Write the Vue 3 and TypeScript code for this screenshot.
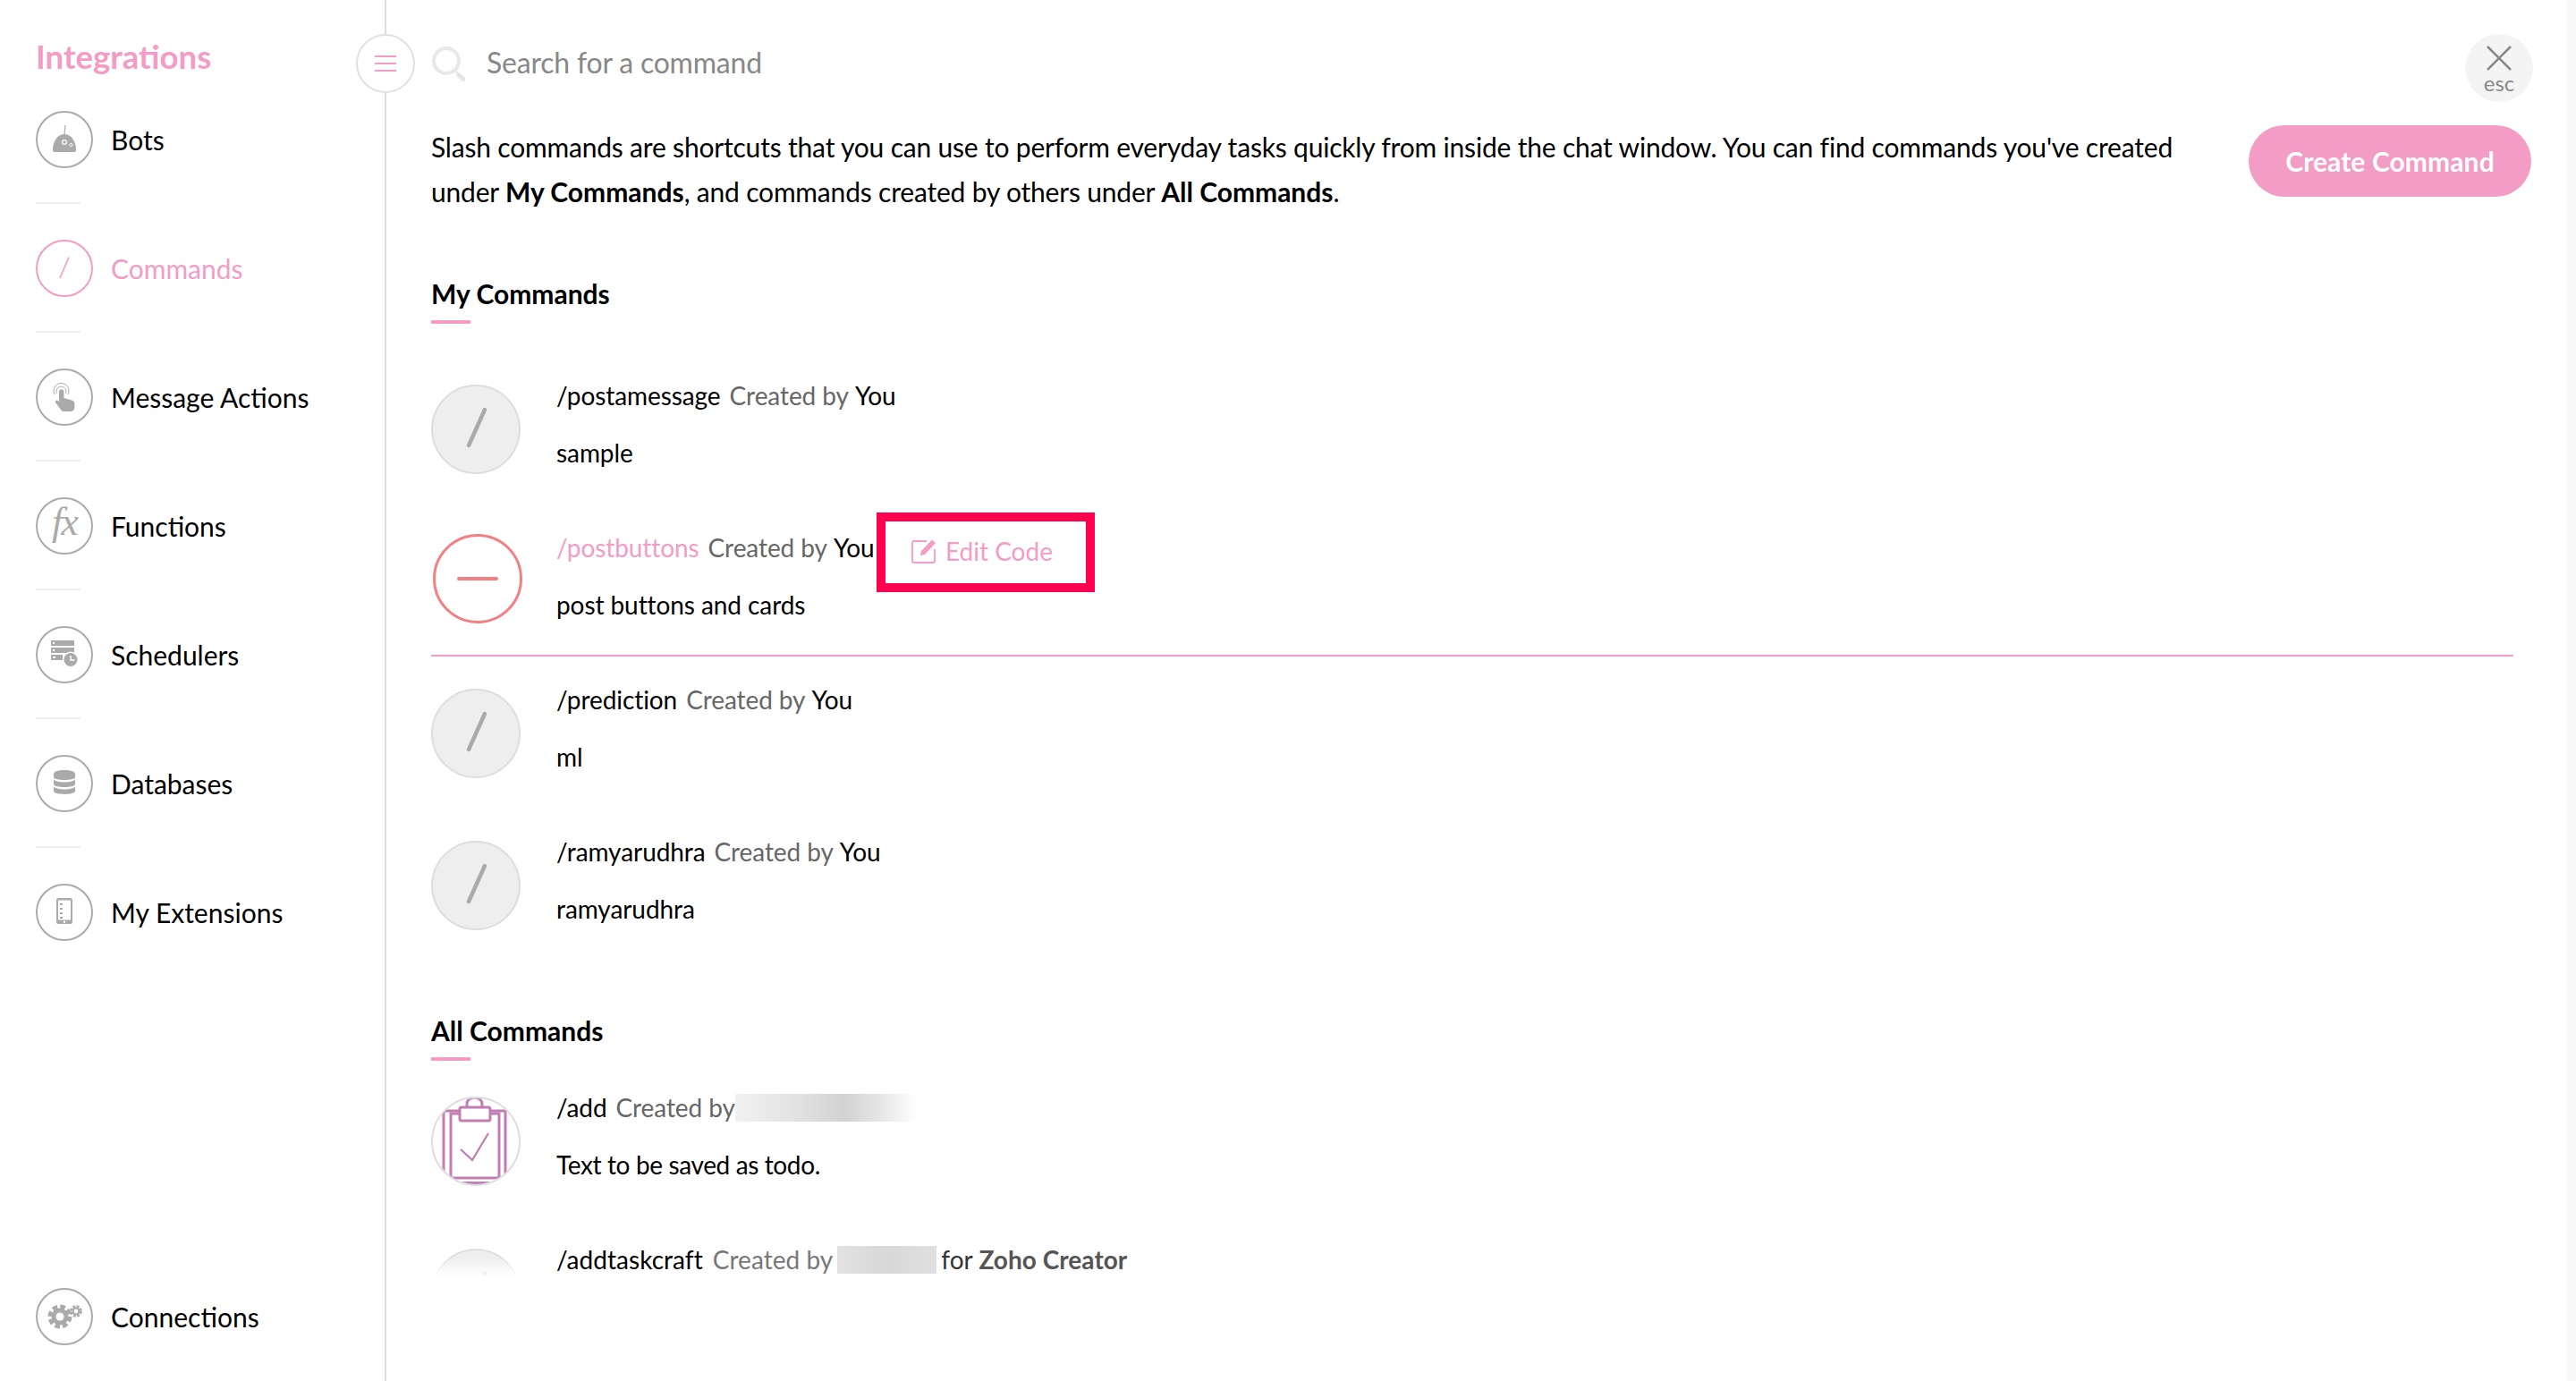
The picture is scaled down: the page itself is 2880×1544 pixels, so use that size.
<script setup lang="ts">
interface NavItem { label: string; icon: string; active?: boolean }
const navItems: NavItem[] = [
  { label: 'Bots', icon: 'bot' },
  { label: 'Commands', icon: 'slash', active: true },
  { label: 'Message Actions', icon: 'hand' },
  { label: 'Functions', icon: 'fx' },
  { label: 'Schedulers', icon: 'sched' },
  { label: 'Databases', icon: 'db' },
  { label: 'My Extensions', icon: 'phone' },
]
const myCommands = [
  { name: '/postamessage', desc: 'sample' },
  { name: '/postbuttons', desc: 'post buttons and cards', hover: true },
  { name: '/prediction', desc: 'ml' },
  { name: '/ramyarudhra', desc: 'ramyarudhra' },
]
</script>

<template>
  <div class="page">
    <aside class="sidebar">
      <div>
        <h1 class="brand">Integrations</h1>
        <nav class="nav">
          <div v-for="item in navItems" :key="item.label" class="nav-block">
            <div class="nav-item" :class="{ active: item.active }">
              <span class="nav-icon">
                <svg v-if="item.icon === 'bot'" viewBox="0 0 64 64" class="ico">
                  <path d="M32 27 L33 16" stroke="#aaa" stroke-width="1.2" fill="none" />
                  <path d="M19 44 C19 33 25 26 32 26 C39 26 45 33 45 44 Q45 46 42 46 H22 Q19 46 19 44 Z" fill="#aaa" />
                  <circle cx="32" cy="35" r="2.4" fill="none" stroke="#fff" stroke-width="1.2" />
                  <circle cx="39.5" cy="38" r="1.6" fill="none" stroke="#fff" stroke-width="1" />
                </svg>
                <svg v-else-if="item.icon === 'slash'" viewBox="0 0 64 64" class="ico">
                  <path d="M37 19.5 L27 43" stroke="#f29cc6" stroke-width="1.6" fill="none" />
                </svg>
                <svg v-else-if="item.icon === 'hand'" viewBox="0 0 64 64" class="ico">
                  <path d="M23.5 28 a5.500 5.500 0 1 1 10 0" stroke="#aaa" stroke-width="1" fill="none" />
                  <path d="M21 29 a8.500 8.500 0 1 1 15 0" stroke="#aaa" stroke-width="1" fill="none" />
                  <path d="M26 26 a2.700 2.700 0 0 1 5.400 0 V33 l9 2.500 q3 1 3 4 V43 q0 5 -5 5 H31 q-2 0 -3 -2 L22 38 q-1 -2.500 2 -2.500 l2 1.500 Z" fill="#aaa" />
                </svg>
                <span v-else-if="item.icon === 'fx'" class="fx">fx</span>
                <svg v-else-if="item.icon === 'sched'" viewBox="0 0 64 64" class="ico">
                  <rect x="17" y="16" width="26" height="6" fill="#aaa" />
                  <rect x="17" y="24" width="26" height="6" fill="#aaa" />
                  <rect x="17" y="32" width="13" height="6" fill="#aaa" />
                  <rect x="19" y="18" width="2" height="2" fill="#fff" />
                  <rect x="19" y="26" width="2" height="2" fill="#fff" />
                  <rect x="19" y="34" width="3" height="2" fill="#fff" />
                  <circle cx="39" cy="37.500" r="9" fill="#fff" />
                  <circle cx="39" cy="37.500" r="7.500" fill="#aaa" />
                  <path d="M39 33 V38 H43.500" stroke="#fff" stroke-width="1.5" fill="none" />
                </svg>
                <svg v-else-if="item.icon === 'db'" viewBox="0 0 64 64" class="ico">
                  <path d="M20 21 C20 15.500 44 15.500 44 21 V25 C44 29 20 29 20 25 Z" fill="#aaa" />
                  <path d="M20 27.500 C23 31.500 41 31.500 44 27.500 V33 C44 37 20 37 20 33 Z" fill="#aaa" />
                  <path d="M20 35.500 C23 39.500 41 39.500 44 35.500 V40.500 C44 45 20 45 20 40.500 Z" fill="#aaa" />
                </svg>
                <svg v-else-if="item.icon === 'phone'" viewBox="0 0 64 64" class="ico">
                  <rect x="23" y="16" width="18" height="29" rx="2.500" fill="#aaa" />
                  <rect x="25" y="18.500" width="14" height="22" fill="#fff" />
                  <path d="M27 23 H30 M27 28 H30 M27 33 H30 M27 38 H30" stroke="#aaa" stroke-width="1.800" />
                  <circle cx="32" cy="42.800" r="1.200" fill="#fff" />
                </svg>
              </span>
              <span class="nav-label">{{ item.label }}</span>
            </div>
            <div class="nav-divider"></div>
          </div>
        </nav>
      </div>
      <div class="nav-item connections">
        <span class="nav-icon">
          <svg viewBox="0 0 64 64" class="ico">
            <circle cx="27" cy="32" r="11" fill="none" stroke="#aaa" stroke-width="5" stroke-dasharray="5.500 3.140" />
            <circle cx="27" cy="32" r="9.500" fill="#aaa" />
            <circle cx="27" cy="32" r="4.500" fill="#fff" />
            <circle cx="45" cy="26" r="5.500" fill="none" stroke="#aaa" stroke-width="2.600" stroke-dasharray="2.900 1.420" />
            <circle cx="45" cy="26" r="4.500" fill="#aaa" />
            <circle cx="45" cy="26" r="2.400" fill="#fff" />
          </svg>
        </span>
        <span class="nav-label">Connections</span>
      </div>
      <button class="menu-toggle" aria-label="Menu">
        <span></span><span></span><span></span>
      </button>
    </aside>

    <main class="main">
      <header class="topbar">
        <div class="search">
          <svg viewBox="0 0 40 40" class="search-icon">
            <circle cx="17" cy="16" r="14" fill="none" stroke="#e8e8e8" stroke-width="4" />
            <path d="M27 27 L30 30" stroke="#e8e8e8" stroke-width="2" />
            <path d="M31 32 L36 36.500" stroke="#e4e4e4" stroke-width="5" stroke-linecap="round" />
          </svg>
          <span class="search-text">Search for a command</span>
        </div>
        <div class="close">
          <svg viewBox="0 0 28 28" class="close-x">
            <path d="M1 1 L27 27 M27 1 L1 27" stroke="#888" stroke-width="2.600" fill="none" />
          </svg>
          <span class="esc">esc</span>
        </div>
      </header>

      <section class="intro">
        <div class="intro-text">
          <p class="intro-line">Slash commands are shortcuts that you can use to perform everyday tasks quickly from inside the chat window. You can find commands you've created</p>
          <p class="intro-line">under <b>My Commands</b>, and commands created by others under <b>All Commands</b>.</p>
        </div>
        <button class="create">Create Command</button>
      </section>

      <div class="lists">
        <h2 class="heading">My Commands</h2>
        <div class="heading-bar first-bar"></div>

        <div v-for="c in myCommands" :key="c.name" class="row" :class="{ hovered: c.hover }">
          <span v-if="c.hover" class="cmd-icon minus"><i></i></span>
          <span v-else class="cmd-icon">
            <svg viewBox="0 0 100 100" class="full"><path d="M60 28 L42 68" stroke="#aaa" stroke-width="4.500" stroke-linecap="round" /></svg>
          </span>
          <div class="cmd-text">
            <div class="cmd-title">
              <span class="cmd-name">{{ c.name }}</span>
              <span class="cmd-by">Created by</span>
              <span class="cmd-you">You</span>
            </div>
            <div class="cmd-desc">{{ c.desc }}</div>
          </div>
          <div v-if="c.hover" class="edit-box">
            <svg viewBox="0 0 28 28" class="edit-icon">
              <path d="M17 3 H3 Q1 3 1 5 V25 Q1 27 3 27 H24 Q26 27 26 25 V12" fill="none" stroke="#f29cc6" stroke-width="1.800" />
              <path d="M10 19 L11 14 L23 1.500 L27 5 L15 18 Z" fill="#f29cc6" />
            </svg>
            <span class="edit-label">Edit Code</span>
          </div>
        </div>

        <h2 class="heading all-heading">All Commands</h2>
        <div class="heading-bar all-bar"></div>

        <div class="row">
          <span class="cmd-icon todo">
            <svg viewBox="0 0 100 100" class="full">
              <defs><clipPath id="todoClip"><circle cx="50" cy="50" r="49" /></clipPath></defs>
              <g clip-path="url(#todoClip)" fill="none" stroke="#c27db3" stroke-width="3">
                <rect x="14" y="16" width="69" height="90" />
                <rect x="22" y="19" width="54" height="72" fill="#fff" />
                <rect x="32" y="12" width="34" height="15" rx="2" fill="#fff" />
                <path d="M40 12 V8 A8.500 7 0 0 1 57 8 V12" />
                <path d="M33 59 L46 71 L64 41" stroke-width="2.200" />
                <path d="M0 97 H100" stroke-width="4" />
              </g>
            </svg>
          </span>
          <div class="cmd-text">
            <div class="cmd-title">
              <span class="cmd-name">/add</span>
              <span class="cmd-by">Created by</span>
              <span class="redact redact-a"></span>
            </div>
            <div class="cmd-desc todo-desc">Text to be saved as todo.</div>
          </div>
        </div>

        <div class="row last-row">
          <span class="cmd-icon">
            <svg viewBox="0 0 100 100" class="full"><path d="M60 28 L42 68" stroke="#aaa" stroke-width="4.500" stroke-linecap="round" /></svg>
          </span>
          <div class="cmd-text">
            <div class="cmd-title">
              <span class="cmd-name">/addtaskcraft</span>
              <span class="cmd-by">Created by</span>
              <span class="redact redact-b"></span>
              <span class="cmd-for">for <b>Zoho Creator</b></span>
            </div>
          </div>
        </div>
      </div>
    </main>
    <div class="scroll-strip"></div>
  </div>
</template>

<style>
html, body { margin: 0; background: #fff; }
</style>

<style scoped>
.page {
  display: flex;
  width: 2880px;
  height: 1544px;
  overflow: hidden;
  background: #fff;
  color: #000;
  font-family: Lato, "Liberation Sans", sans-serif;
}
.sidebar {
  position: relative;
  box-sizing: border-box;
  flex: 0 0 432px;
  height: 1544px;
  border-right: 2px solid #ddd;
  padding: 0 0 40px 40px;
  display: flex;
  flex-direction: column;
  justify-content: space-between;
}
.brand {
  margin: 0;
  padding-top: 41px;
  height: 44px;
  line-height: 44px;
  font-size: 36.6px;
  font-weight: 700;
  color: #f29cc6;
}
.nav { margin-top: 39px; }
.nav-block { height: 144px; }
.nav-item {
  display: flex;
  align-items: center;
  gap: 20px;
  height: 64px;
}
.nav-icon {
  box-sizing: border-box;
  width: 64px;
  height: 64px;
  flex: none;
  border: 2px solid #aaa;
  border-radius: 50%;
  display: flex;
  align-items: center;
  justify-content: center;
  position: relative;
}
.ico {
  position: absolute;
  left: -2px;
  top: -2px;
  width: 64px;
  height: 64px;
}
.fx {
  font-family: "Liberation Serif", serif;
  font-style: italic;
  font-size: 44px;
  line-height: 1;
  color: #aaa;
  letter-spacing: -2px;
  margin-top: -8px;
}
.nav-label { font-size: 30px; line-height: 40px; }
.nav-item.active .nav-icon { border-color: #f29cc6; }
.nav-item.active .nav-label { color: #f29cc6; }
.nav-divider {
  width: 50px;
  height: 2px;
  margin-top: 38px;
  background: #eee;
}
.nav-block:last-child .nav-divider { display: none; }
.menu-toggle {
  position: absolute;
  top: 38px;
  right: -34px;
  box-sizing: border-box;
  width: 66px;
  height: 66px;
  padding: 0;
  border: 2px solid #e0e0e0;
  border-radius: 50%;
  background: #fff;
  display: flex;
  flex-direction: column;
  align-items: center;
  justify-content: center;
  gap: 6px;
}
.menu-toggle span {
  display: block;
  width: 24px;
  height: 2px;
  background: #f29cc6;
}

.main {
  flex: 1;
  min-width: 0;
  padding-left: 50px;
  box-sizing: border-box;
}
.scroll-strip {
  flex: 0 0 10px;
  background: #f9f9f9;
}
.topbar {
  display: flex;
  justify-content: space-between;
  align-items: flex-start;
  padding: 38px 38px 0 0;
}
.search {
  display: flex;
  align-items: center;
  height: 66px;
  gap: 22px;
}
.search-icon { width: 40px; height: 40px; margin-top: 2px; }
.search-text {
  font-size: 32px;
  color: #888;
  letter-spacing: -0.2px;
  padding-bottom: 3px;
}
.close {
  box-sizing: border-box;
  width: 76px;
  height: 76px;
  border-radius: 50%;
  background: #f4f4f4;
  display: flex;
  flex-direction: column;
  align-items: center;
  padding-top: 13px;
}
.close-x { width: 28px; height: 28px; flex: none; }
.esc { font-size: 24px; line-height: 24px; color: #888; margin-top: 2px; }

.intro {
  display: flex;
  justify-content: space-between;
  align-items: flex-start;
  margin-top: 26px;
  padding-right: 40px;
}
.intro-text {
  width: 1960px;
  margin-top: -1px;
  font-size: 30px;
  line-height: 50px;
  letter-spacing: -0.19px;
}
.intro-line { margin: 0; white-space: nowrap; }
.intro-text b { letter-spacing: 0; }
.create {
  width: 316px;
  height: 80px;
  flex: none;
  border: 0;
  border-radius: 40px;
  background: #f29cc6;
  color: #fff;
  font-family: inherit;
  font-size: 30px;
  font-weight: 700;
  letter-spacing: 0.1px;
  padding: 0;
}

.lists {
  box-sizing: border-box;
  height: 1191px;
  overflow: hidden;
  padding-top: 69px;
}
.heading {
  margin: 0;
  font-size: 30px;
  line-height: 40px;
  font-weight: 700;
}
.heading-bar {
  width: 44px;
  height: 4px;
  margin-top: 10px;
  background: #f29cc6;
}
.first-bar { margin-bottom: 59px; }
.all-heading { margin-top: 59px; }
.all-bar { margin-bottom: 31px; }
.row {
  position: relative;
  box-sizing: border-box;
  display: flex;
  gap: 40px;
  width: 2328px;
  height: 142px;
  margin-bottom: 28px;
}
.row.hovered {
  height: 143px;
  margin-bottom: 27px;
  border-bottom: 2px solid #f29cc6;
}
.cmd-icon {
  box-sizing: border-box;
  flex: none;
  width: 100px;
  height: 100px;
  margin-top: 9px;
  border: 2px solid #ddd;
  border-radius: 50%;
  background: #eee;
  position: relative;
  overflow: hidden;
}
.full {
  position: absolute;
  left: -2px;
  top: -2px;
  width: 100px;
  height: 100px;
}
.cmd-icon.todo { background: #fff; }
.cmd-icon.minus {
  background: #fff;
  border: 3px solid #f47f83;
  margin-top: 6px;
  margin-left: 2px;
  margin-right: -2px;
  display: flex;
  align-items: center;
  justify-content: center;
}
.cmd-icon.minus i {
  display: block;
  width: 46px;
  height: 4px;
  border-radius: 2px;
  background: #f47f83;
}
.cmd-title {
  display: flex;
  align-items: center;
  height: 42px;
  font-size: 28px;
  white-space: pre;
  letter-spacing: -0.08px;
}
.cmd-by { color: #666; margin-left: 10px; }
.cmd-you { margin-left: 7px; }
.hovered .cmd-name { color: #f29cc6; }
.cmd-desc {
  margin-top: 22px;
  line-height: 42px;
  font-size: 28px;
  letter-spacing: -0.08px;
}
.todo-desc { letter-spacing: -0.37px; }
.redact { display: block; height: 31px; }
.redact-a {
  width: 203px;
  background: linear-gradient(90deg, #f1f1f1, #e4e4e4 30%, #d2d2d2 60%, #e6e6e6 80%, #fff 100%);
}
.redact-b {
  width: 111px;
  margin-left: 5px;
  background: linear-gradient(90deg, #e2e2e2, #d8d8d8 50%, #e0e0e0);
}
.cmd-for { margin-left: 5px; color: #333; }
.cmd-for b { color: #555; font-weight: 700; }
.last-row .cmd-title { letter-spacing: 0.04px; }
.last-row .cmd-by { color: #777; margin-left: 11px; }
.last-row .cmd-icon {
  -webkit-mask-image: linear-gradient(#000 0, #000 8px, transparent 32px);
  mask-image: linear-gradient(#000 0, #000 8px, transparent 32px);
}
.edit-box {
  position: absolute;
  left: 498px;
  top: -18px;
  box-sizing: border-box;
  width: 244px;
  height: 89px;
  border: 10px solid #ff0050;
  display: flex;
  align-items: center;
  gap: 10px;
  padding-left: 29px;
  padding-bottom: 4px;
}
.edit-icon { width: 28px; height: 28px; flex: none; }
.edit-label { font-size: 28px; color: #f29cc6; }
</style>
